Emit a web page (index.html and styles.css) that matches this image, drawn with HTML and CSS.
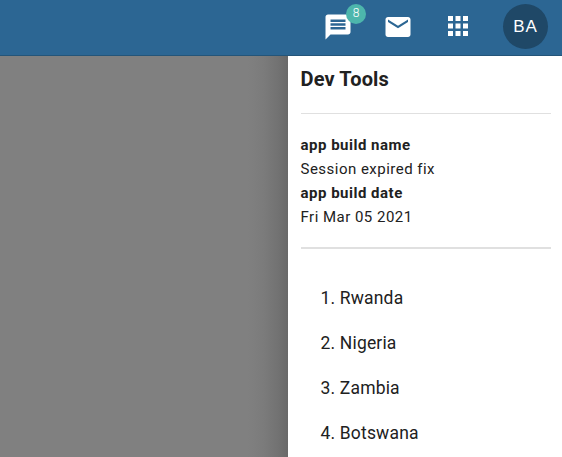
FILE: index.html
```html
<!DOCTYPE html>
<html lang="en">
<head>
<meta charset="utf-8">
<title>Dev Tools</title>
<link rel="stylesheet" href="styles.css">
</head>
<body>
<header class="topbar">
  <div class="messages">
    <svg class="icon" viewBox="0 0 24 24"><path d="M20 2H4c-1.1 0-1.99.9-1.99 2L2 22l4-4h14c1.1 0 2-.9 2-2V4c0-1.1-.9-2-2-2zm-2 12H6v-2h12v2zm0-3H6V9h12v2zm0-3H6V6h12v2z"/></svg>
    <span class="badge">8</span>
  </div>
  <svg class="icon mail" viewBox="0 0 24 24"><path d="M20 4H4c-1.1 0-1.99.9-1.99 2L2 18c0 1.1.9 2 2 2h16c1.1 0 2-.9 2-2V6c0-1.1-.9-2-2-2zm0 4l-8 5-8-5V6l8 5 8-5v2z"/></svg>
  <svg class="icon apps" viewBox="0 0 24 24"><path d="M4 8h4V4H4v4zm6 12h4v-4h-4v4zm-6 0h4v-4H4v4zm0-6h4v-4H4v4zm6 0h4v-4h-4v4zm6-10v4h4V4h-4zm-6 4h4V4h-4v4zm6 6h4v-4h-4v4zm0 6h4v-4h-4v4z"/></svg>
  <div class="avatar">BA</div>
</header>
<main class="content">
  <div class="backdrop"></div>
  <aside class="drawer">
    <h1>Dev Tools</h1>
    <dl class="build">
      <dt>app build name</dt><dd>Session expired fix</dd>
      <dt>app build date</dt><dd>Fri Mar 05 2021</dd>
    </dl>
    <ol class="countries">
      <li>1. Rwanda</li><li>2. Nigeria</li><li>3. Zambia</li><li>4. Botswana</li>
    </ol>
  </aside>
</main>
</body>
</html>
```
FILE: styles.css
```css
* { box-sizing: border-box; }
body { margin: 0; height: 457px; overflow: hidden; display: flex; flex-direction: column; font-family: Roboto, sans-serif; color: #212121; }
.topbar { height: 56px; flex: none; display: flex; align-items: center; justify-content: flex-end; padding: 0 14px 3px 0; background: #2c6693; border-bottom: 1px solid #245579; }
.icon { display: block; width: 30px; height: 30px; fill: #fff; }
.messages { position: relative; margin-right: 30px; padding-top: 2px; }
.badge { position: absolute; left: 23px; top: -6px; width: 20px; height: 20px; border-radius: 50%; background: #4db6ac; color: #fff; font-size: 12px; font-weight: 300; line-height: 19px; text-align: center; }
.mail { margin: 2px 30px 0 0; }
.apps { margin-right: 30px; }
.avatar { width: 45px; height: 45px; border-radius: 50%; background: #1f4867; color: #fff; font-family: "Liberation Sans", sans-serif; font-size: 17px; line-height: 45px; letter-spacing: 1px; text-align: center; }
.content { flex: 1; display: flex; min-height: 0; }
.backdrop { width: 288px; background: linear-gradient(90deg, #808080 248px, #7b7b7b 264px, #727272 278px, #696969); }
.drawer { flex: 1; background: #fff; padding: 0 11px 0 13px; }
h1 { margin: 0; height: 58px; padding-top: 8px; border-bottom: 1px solid #e0e0e0; font-size: 20px; line-height: 30px; font-weight: 700; letter-spacing: .15px; text-indent: -.5px; }
.build { margin: 0; height: 135px; padding-top: 19px; border-bottom: 2px solid #e0e0e0; font-size: 15px; line-height: 24px; text-indent: -.5px; }
dt { font-weight: 700; letter-spacing: .5px; }
dd { margin: 0; letter-spacing: .48px; }
.countries { list-style: none; margin: 0; padding: 27px 0 0 19.5px; font-size: 17.5px; line-height: 45px; letter-spacing: .17px; }
```
